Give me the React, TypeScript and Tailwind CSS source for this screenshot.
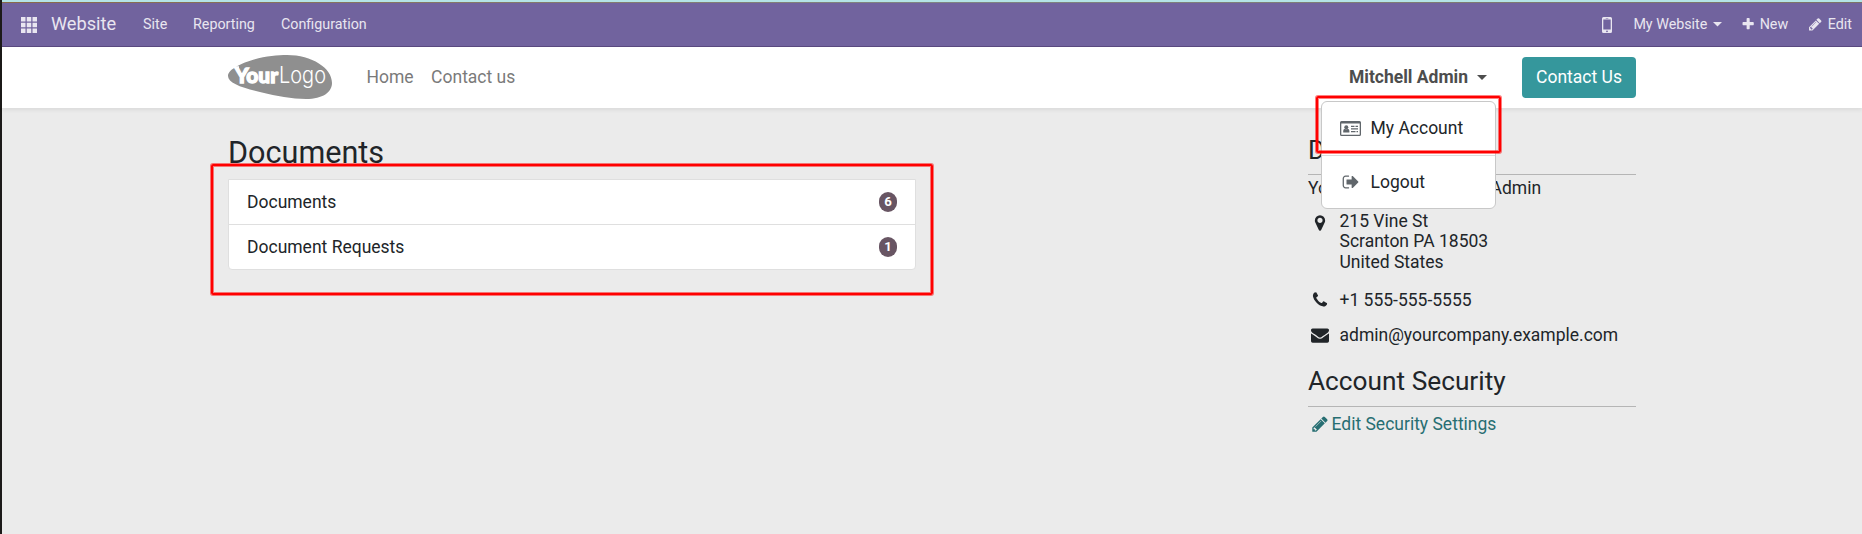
import React from "react";

const paths = {
  pencil: "M491 1536l91-91-235-235-91 91v107h128v128h107zm523-928q0-22-22-22-10 0-17 7l-542 542q-7 7-7 17 0 22 22 22 10 0 17-7l542-542q7-7 7-17zm-54-192l416 416-832 832h-416v-416zm683 96q0 53-37 90l-166 166-416-416 166-165q36-38 90-38 53 0 91 38l235 234q37 39 37 91z",
  signOut: "M704 1440q0 4 1 20t.5 26.5-3 23.5-10 19.5-20.5 6.5h-320q-119 0-203.5-84.5t-84.5-203.5v-704q0-119 84.5-203.5t203.5-84.5h320q13 0 22.5 9.5t9.5 22.5q0 4 1 20t.5 26.5-3 23.5-10 19.5-20.5 6.5h-320q-66 0-113 47t-47 113v704q0 66 47 113t113 47h312l11.5 1 11.5 3 8 5.5 7 9 2 13.5zm928-544q0 26-19 45l-544 544q-19 19-45 19t-45-19-19-45v-288h-448q-26 0-45-19t-19-45v-384q0-26 19-45t45-19h448v-288q0-26 19-45t45-19 45 19l544 544q19 19 19 45z",
  phone: "M1600 1240q0 27-10 70.5t-21 68.5q-21 50-122 106-94 51-186 51-27 0-53-3.5t-57.5-12.5-47-14.5-55.5-20.5-49-18q-98-35-175-83-127-79-264-216t-216-264q-48-77-83-175-3-9-18-49t-20.5-55.5-14.5-47-12.5-57.5-3.5-53q0-92 51-186 56-101 106-122 25-11 68.5-21t70.5-10q14 0 21 3 18 6 53 76 11 19 30 54t35 63.5 31 53.5q3 4 17.5 25t21.5 35.5 7 28.5q0 20-28.500 50t-62 55-62 53-28.500 46q0 9 5 22.500t8.500 20.500 14 24 11.500 19q76 137 174 235t235 174q2 1 19 11.500t24 14 20.500 8.500 22.500 5q18 0 46-28.500t53-62 55-62 50-28.500q14 0 28.500 7t35.500 21.500 25 17.500q25 15 53.500 31t63.500 35 54 30q70 35 76 53 3 7 3 21z",
  marker: "M1152 640q0-106-75-181t-181-75-181 75-75 181 75 181 181 75 181-75 75-181zm256 0q0 109-33 179l-364 774q-16 33-47.5 52t-67.5 19-67.5-19-46.5-52l-365-774q-33-70-33-179 0-212 150-362t362-150 362 150 150 362z",
  envelope: "M1792 710v794q0 66-47 113t-113 47h-1472q-66 0-113-47t-47-113v-794q44 49 101 87 362 246 497 345 57 42 92.5 65.5t94.5 48 110 24.5h2q51 0 110-24.5t94.5-48 92.5-65.5q170-123 498-345 57-39 100-87zm0-294q0 79-49 151t-122 123q-376 261-468 325-10 7-42.5 31t-54 38.5-52 32.5-57.5 27-50 9h-2q-23 0-50-9t-57.5-27-52-32.5-54-38.5-42.5-31q-91-64-262-182.5t-205-142.5q-62-42-117-115.5t-55-136.5q0-78 41.5-130t118.5-52h1472q65 0 112.5 47t47.5 113z",
  plus: "M1600 736v192q0 40-28 68t-68 28h-416v416q0 40-28 68t-68 28h-192q-40 0-68-28t-28-68v-416h-416q-40 0-68-28t-28-68v-192q0-40 28-68t68-28h416v-416q0-40 28-68t68-28h192q40 0 68 28t28 68v416h416q40 0 68 28t28 68z",
};

function Icon({ name, className }: { name: keyof typeof paths; className: string }) {
  return (
    <svg viewBox="0 0 1792 1792" fill="currentColor" className={"shrink-0 " + className}>
      <path d={paths[name]} />
    </svg>
  );
}

function Caret({ className }: { className: string }) {
  return (
    <svg viewBox="0 0 10 5" fill="currentColor" className={className}>
      <path d="M0 0h10L5 5z" />
    </svg>
  );
}

function IdCard() {
  return (
    <svg viewBox="0 0 21 15" fill="currentColor" className="h-[15px] w-[21px] shrink-0">
      <path fillRule="evenodd" d="M1.500 0h18A1.500 1.500 0 0 1 21 1.500v12a1.500 1.500 0 0 1-1.500 1.500h-18A1.500 1.500 0 0 1 0 13.500v-12A1.500 1.500 0 0 1 1.500 0zM1.300 2.500v11.200h18.400V2.500z" />
      <circle cx="6.300" cy="6.200" r="2" />
      <path d="M3.200 11.500V10q0-2 1.600-2.200 1.500 1 3 0 1.600.2 1.600 2.200v1.500zM11 4.700h3.500V6H11zM15.500 4.700H18V6h-2.500zM11 7.300h7v1.300h-7zM11 10h4.500v1.300H11zM16.500 10H18v1.300h-1.500z" />
    </svg>
  );
}

function Logo() {
  return (
    <svg viewBox="0 0 104 44" className="-mt-0.5 h-11 w-[104px]">
      <path fill="#8f8f8f" d="M0 21C0 14 14 8 26 4.500 38 1 50 0 59 0c25 0 45 13 45 28 0 9-9 16-26 16-14 0-30-3-44-6.500C14 33 0 28 0 21z" />
      <path fill="#fff" d="M4 11.200h7v2H4z" />
      <text x="7" y="27.800" fill="#fff" stroke="#fff" strokeWidth="1.300" fontFamily="Lato, sans-serif" fontWeight="900" fontSize="21.500" textLength="43" lengthAdjust="spacingAndGlyphs">Your</text>
      <text x="51" y="28.200" fill="#fff" fontFamily="Inter, sans-serif" fontWeight="300" fontSize="22.500" textLength="47" lengthAdjust="spacingAndGlyphs">Logo</text>
    </svg>
  );
}

const documents = [
  { label: "Documents", count: 6 },
  { label: "Document Requests", count: 1 },
];

export default function App() {
  return (
    <div className="flex h-[534px] w-[1862px] overflow-hidden bg-[#ebebeb] font-['Roboto',sans-serif] text-[17.500px] leading-[26.400px] text-[#212529]">
      <div className="w-0.5 shrink-0 bg-[#1c1a19]" />
      <div className="flex min-w-0 flex-1 flex-col">
        <div className="h-0.5 shrink-0 bg-[#b4e4e6]" />
        <div className="h-px shrink-0 bg-linear-to-r from-[#8a6a48] via-[#7f8583] to-[#7d7466]" />
        <nav className="flex h-11 shrink-0 items-center border-b border-[#5a4a80] bg-[#71639e] pl-[19px] pr-2.5 text-[14.300px] text-[#e9e6f0]">
          <svg viewBox="0 0 16 16" fill="currentColor" className="mr-3.5 size-4">
            <path d="M0 0h4.500v4.500H0zM5.750 0h4.500v4.500h-4.500zM11.500 0H16v4.500h-4.500zM0 5.750h4.500v4.500H0zM5.750 5.750h4.500v4.500h-4.500zM11.500 5.750H16v4.500h-4.500zM0 11.500h4.500V16H0zM5.750 11.500h4.500V16h-4.500zM11.500 11.500H16V16h-4.500z" />
          </svg>
          <span className="w-[92px] text-[18.200px]">Website</span>
          <span className="w-[50px]">Site</span>
          <span className="w-[88px]">Reporting</span>
          <span>Configuration</span>
          <div className="ml-auto flex items-center">
            <svg viewBox="0 0 10 16" fill="currentColor" className="mr-[21px] h-4 w-2.5">
              <path fillRule="evenodd" d="M1.500 0h7A1.500 1.500 0 0 1 10 1.500v13A1.500 1.500 0 0 1 8.500 16h-7A1.500 1.500 0 0 1 0 14.500v-13A1.500 1.500 0 0 1 1.500 0zM1.300 2.500v10h7.400v-10zM5 13.400a.9.9 0 1 0 0 1.800.9.9 0 0 0 0-1.800zM3.700 1v.5h2.600V1z" />
            </svg>
            <span>My Website</span>
            <Caret className="ml-1.5 h-[4.500px] w-[9px]" />
            <Icon name="plus" className="ml-[19px] size-[14.300px]" />
            <span className="ml-1">New</span>
            <Icon name="pencil" className="ml-5 size-[14.600px]" />
            <span className="ml-[5px]">Edit</span>
          </div>
        </nav>
        <header className="relative z-10 flex h-[61px] shrink-0 items-center bg-white pl-[226px] pr-[226px] shadow-[0_2px_4px_rgba(0,0,0,0.075)]">
          <Logo />
          <span className="ml-[34.500px] text-[#7a7a7a]">Home</span>
          <span className="ml-[17.500px] text-[#7a7a7a]">Contact us</span>
          <div className="relative ml-auto flex h-[27px] w-[139px] items-center justify-between font-bold text-[#4d4d4d]">
            <span className="ml-px whitespace-nowrap">Mitchell Admin</span>
            <Caret className="h-[5px] w-2.5" />
            <div className="absolute top-[37px] -left-[27px] flex h-[108px] w-[175px] flex-col rounded-md border border-[#c8c8c8] bg-white font-normal text-[#212529]">
              <div className="flex h-[53px] items-center pl-[18px]">
                <span className="flex w-[30.500px] text-[#60666b]"><IdCard /></span>
                <span className="-mt-px">My Account</span>
              </div>
              <div className="h-px bg-[#dcdcdc]" />
              <div className="flex h-[52px] items-center pl-[18px]">
                <span className="flex w-[30.500px] pl-[1.500px] text-[#60666b]"><Icon name="signOut" className="size-[18px]" /></span>
                <span>Logout</span>
              </div>
            </div>
            <div className="absolute top-8 -left-8 h-[57px] w-[185px] rounded-[2px] border-2 border-[#ff0000] shadow-[0_0_0_1px_#ff000080,inset_0_0_0_1px_#ff000080]" />
          </div>
          <button className="ml-[35px] h-[41px] w-[114px] rounded bg-[#35979c] text-white">Contact Us</button>
        </header>
        <main className="flex justify-between px-[226px]">
          <section className="relative w-[688px] pt-[27px]">
            <h2 className="h-11 text-[30.600px] leading-9">Documents</h2>
            <div className="overflow-hidden rounded-b-[4px] border border-[#dfdfdf] bg-white">
              {documents.map((item) => (
                <div key={item.label} className="flex h-[45px] items-center justify-between border-b border-[#dfdfdf] px-[18px] last:h-11 last:border-b-0">
                  <span>{item.label}</span>
                  <span className="flex h-5 w-[18px] items-center justify-center rounded-full bg-[#685563] text-[13.200px] font-bold leading-none text-white">{item.count}</span>
                </div>
              ))}
            </div>
            <div className="absolute top-14 -left-[17px] h-[131px] w-[722px] rounded-[2px] border-2 border-[#ff0000] shadow-[0_0_0_1px_#ff000080,inset_0_0_0_1px_#ff000080]" />
          </section>
          <aside className="w-[328px] pt-[26px]">
            <h3 className="h-[41px] border-b border-[#b5b5b5] text-[26.250px] leading-8">Details</h3>
            <p className="mt-px h-[25px] leading-[24px]">YourCompany, Mitchell Admin</p>
            <div className="mt-2.5 flex leading-[20.400px]">
              <Icon name="marker" className="mt-[3px] mr-[11px] ml-[2.500px] size-[18px]" />
              <address className="not-italic">215 Vine St<br />Scranton PA 18503<br />United States</address>
            </div>
            <div className="mt-[14.300px] flex items-center">
              <Icon name="phone" className="mr-[11px] ml-[2.500px] size-[18px]" />
              <span>+1 555-555-5555</span>
            </div>
            <div className="mt-[9px] flex items-center">
              <Icon name="envelope" className="mr-[11px] ml-[2.500px] size-[18px]" />
              <span>admin@yourcompany.example.com</span>
            </div>
            <h3 className="mt-[17px] h-[42px] border-b border-[#b5b5b5] text-[26.250px] leading-8">Account Security</h3>
            <div className="mt-1 flex items-center text-[#276e72]">
              <Icon name="pencil" className="-mt-px mr-[3px] ml-[2.500px] size-[18px]" />
              <span>Edit Security Settings</span>
            </div>
          </aside>
        </main>
      </div>
    </div>
  );
}
